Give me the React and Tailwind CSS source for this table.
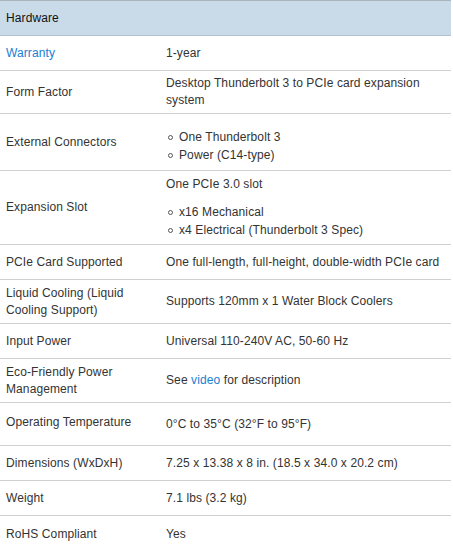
import React from "react";

const Bullet = ({ children }) => (
  <div className="flex items-center h-[18px]">
    <span className="ml-[2px] mr-[6px] inline-block w-[5px] h-[5px] rounded-full border border-[#555]" />
    <span>{children}</span>
  </div>
);

const Row = ({ label, h, children, labelClass = "" }) => (
  <div className={`flex items-center border-b border-[#d0d0d0] ${h}`}>
    <div className={`w-[166px] pl-[6px] shrink-0 leading-[17px] ${labelClass}`}>{label}</div>
    <div className="flex-1 leading-[17px]">{children}</div>
  </div>
);

export default function App() {
  return (
    <div
      className="w-[451px] bg-white text-[12px] text-[#333] tracking-[0.1px]"
      style={{ fontFamily: '"Liberation Sans", Arial, sans-serif' }}
    >
      <div className="h-[36px] bg-[#c9dbe9] border-t border-[#a9b4bd] border-b border-b-[#b4c2cd] flex items-center pl-[6px] text-[#111]">
        Hardware
      </div>
      <Row label={<span className="text-[#1a7ed2]">Warranty</span>} h="h-[35px]">
        1-year
      </Row>
      <Row label="Form Factor" h="h-[43px]">
        Desktop Thunderbolt 3 to PCIe card expansion
        <br />
        system
      </Row>
      <Row label="External Connectors" h="h-[57px]">
        <div className="mt-[8px]">
          <Bullet>One Thunderbolt 3</Bullet>
          <Bullet>Power (C14-type)</Bullet>
        </div>
      </Row>
      <Row label="Expansion Slot" h="h-[74px]">
        <div className="h-[18px] flex items-center">One PCIe 3.0 slot</div>
        <div className="mt-[10px]">
          <Bullet>x16 Mechanical</Bullet>
          <Bullet>x4 Electrical (Thunderbolt 3 Spec)</Bullet>
        </div>
      </Row>
      <Row label="PCIe Card Supported" h="h-[35px]">
        One full-length, full-height, double-width PCIe card
      </Row>
      <Row
        label={
          <>
            Liquid Cooling (Liquid
            <br />
            Cooling Support)
          </>
        }
        h="h-[44px]"
      >
        Supports 120mm x 1 Water Block Coolers
      </Row>
      <Row label="Input Power" h="h-[35px]">
        Universal 110-240V AC, 50-60 Hz
      </Row>
      <Row
        label={
          <>
            Eco-Friendly Power
            <br />
            Management
          </>
        }
        h="h-[44px]"
      >
        See <span className="text-[#1a7ed2]">video</span> for description
      </Row>
      <Row label="Operating Temperature" h="h-[43px]" labelClass="-mt-[3px]">
        0°C to 35°C (32°F to 95°F)
      </Row>
      <Row label="Dimensions (WxDxH)" h="h-[35px]">
        7.25 x 13.38 x 8 in. (18.5 x 34.0 x 20.2 cm)
      </Row>
      <Row label="Weight" h="h-[35px]">
        7.1 lbs (3.2 kg)
      </Row>
      <div className="flex items-center h-[35px]">
        <div className="w-[166px] pl-[6px] shrink-0">RoHS Compliant</div>
        <div className="flex-1">Yes</div>
      </div>
    </div>
  );
}
